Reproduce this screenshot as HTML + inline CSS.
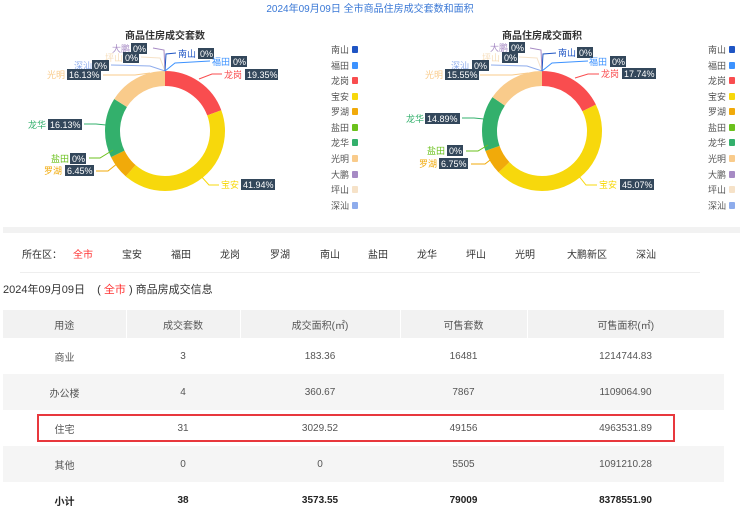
<!DOCTYPE html>
<html><head><meta charset="utf-8"><style>
*{margin:0;padding:0;box-sizing:border-box}
body{width:740px;height:524px;background:#fff;font-family:"Liberation Sans","Noto Sans CJK SC",sans-serif;overflow:hidden;position:relative;color:#333}
svg text{font-family:"Liberation Sans","Noto Sans CJK SC",sans-serif}
.band{position:absolute;left:3px;top:227px;width:737px;height:6px;background:#f2f2f2}
.filter{position:absolute;top:246px;left:22px;font-size:10px;color:#333;white-space:nowrap}
.filter span{position:absolute;top:0}
.hr{position:absolute;left:20px;top:272px;width:680px;height:1px;background:#eee}
.ttl{position:absolute;left:3px;top:281px;font-size:11px;color:#333;white-space:nowrap}
table{position:absolute;left:3px;top:310px;width:721px;border-collapse:collapse;font-size:10px;color:#555}
td{text-align:center;padding:0}
tr.h td{background:#f2f2f2;height:28px;border-left:1px solid #fff}
tr.g td{background:#f5f5f5}
tr.r td{height:36px}
tr.b td{font-weight:bold;color:#222}
.box{position:absolute;left:37px;top:414px;width:638px;height:28px;border:2px solid #e8383d}
</style></head><body>
<svg width="740" height="226" style="position:absolute;left:0;top:0">
<text x="370" y="12" text-anchor="middle" font-size="10" fill="#3a78d6">2024年09月09日 全市商品住房成交套数和面积</text>
<text x="165" y="39" text-anchor="middle" font-size="10" fill="#333" font-weight="bold">商品住房成交套数</text>
<text x="542" y="39" text-anchor="middle" font-size="10" fill="#333" font-weight="bold">商品住房成交面积</text>
<!-- donut 1 -->
<g transform="rotate(-90 165 131)" fill="none" stroke-width="15">
<circle cx="165" cy="131" r="52.5" stroke="#f94d4f" stroke-dasharray="63.83 400" stroke-dashoffset="0"/>
<circle cx="165" cy="131" r="52.5" stroke="#f7d80c" stroke-dasharray="138.35 400" stroke-dashoffset="-63.83"/>
<circle cx="165" cy="131" r="52.5" stroke="#f1aa0a" stroke-dasharray="21.28 400" stroke-dashoffset="-202.18"/>
<circle cx="165" cy="131" r="52.5" stroke="#33b06c" stroke-dasharray="53.21 400" stroke-dashoffset="-223.46"/>
<circle cx="165" cy="131" r="52.5" stroke="#f9cb8b" stroke-dasharray="53.21 400" stroke-dashoffset="-276.67"/>
</g>
<g transform="rotate(-90 542 131)" fill="none" stroke-width="15">
<circle cx="542" cy="131" r="52.5" stroke="#f94d4f" stroke-dasharray="58.52 400" stroke-dashoffset="0"/>
<circle cx="542" cy="131" r="52.5" stroke="#f7d80c" stroke-dasharray="148.67 400" stroke-dashoffset="-58.52"/>
<circle cx="542" cy="131" r="52.5" stroke="#f1aa0a" stroke-dasharray="22.27 400" stroke-dashoffset="-207.19"/>
<circle cx="542" cy="131" r="52.5" stroke="#33b06c" stroke-dasharray="49.12 400" stroke-dashoffset="-229.46"/>
<circle cx="542" cy="131" r="52.5" stroke="#f9cb8b" stroke-dasharray="51.29 400" stroke-dashoffset="-278.58"/>
</g>
<!-- leader lines chart1 -->
<g fill="none" stroke-width="1">
<polyline points="165,71 164,50 153,48" stroke="#a68ac4"/>
<polyline points="165,71 160,58 141,57" stroke="#f6e2c8"/>
<polyline points="165,71 150,66 111,65" stroke="#8eacec"/>
<polyline points="150,73 135,75 103,75" stroke="#f9cb8b"/>
<polyline points="165,71 166,54 176,53" stroke="#1f55c4"/>
<polyline points="165,71 175,63 210,61" stroke="#3c92ff"/>
<polyline points="199,79 212,74 222,74" stroke="#f94d4f"/>
<polyline points="106,125 96,124 84,124" stroke="#33b06c"/>
<polyline points="113,150 100,158 89,158" stroke="#6bc11c"/>
<polyline points="118,163 108,171 96,171" stroke="#f1aa0a"/>
<polyline points="200,175 209,185 219,185" stroke="#f7d80c"/>
<polyline points="542,71 541,50 530,48" stroke="#a68ac4"/>
<polyline points="542,71 537,58 519,57" stroke="#f6e2c8"/>
<polyline points="542,71 527,66 491,65" stroke="#8eacec"/>
<polyline points="528,73 512,75 480,75" stroke="#f9cb8b"/>
<polyline points="542,71 543,54 556,53" stroke="#1f55c4"/>
<polyline points="542,71 552,63 588,61" stroke="#3c92ff"/>
<polyline points="575,78 588,74 599,74" stroke="#f94d4f"/>
<polyline points="484,119 474,118 462,118" stroke="#33b06c"/>
<polyline points="488,145 478,151 466,151" stroke="#6bc11c"/>
<polyline points="494,157 485,164 471,164" stroke="#f1aa0a"/>
<polyline points="578,175 586,185 597,185" stroke="#f7d80c"/>
</g>
<g font-size="9">
<!-- chart1 labels -->
<text x="112" y="52" fill="#a68ac4">大鹏</text><rect x="131" y="43" width="16" height="11" fill="#33475b"/><text x="133" y="52" fill="#fff">0%</text>
<text x="105" y="61" fill="#f6dcb8">坪山</text><rect x="123" y="52" width="16" height="11" fill="#33475b"/><text x="125" y="61" fill="#fff">0%</text>
<text x="74" y="69" fill="#8eacec">深汕</text><rect x="92" y="60" width="17" height="11" fill="#33475b"/><text x="94" y="69" fill="#fff">0%</text>
<text x="47" y="78" fill="#f9cb8b">光明</text><rect x="67" y="69" width="34" height="11" fill="#33475b"/><text x="69" y="78" fill="#fff">16.13%</text>
<text x="178" y="57" fill="#1f55c4">南山</text><rect x="198" y="48" width="16" height="11" fill="#33475b"/><text x="200" y="57" fill="#fff">0%</text>
<text x="212" y="65" fill="#3c92ff">福田</text><rect x="231" y="56" width="16" height="11" fill="#33475b"/><text x="233" y="65" fill="#fff">0%</text>
<text x="224" y="78" fill="#f94d4f">龙岗</text><rect x="245" y="69" width="33" height="11" fill="#33475b"/><text x="247" y="78" fill="#fff">19.35%</text>
<text x="28" y="128" fill="#33b06c">龙华</text><rect x="48" y="119" width="34" height="11" fill="#33475b"/><text x="50" y="128" fill="#fff">16.13%</text>
<text x="51" y="162" fill="#6bc11c">盐田</text><rect x="70" y="153" width="16" height="11" fill="#33475b"/><text x="72" y="162" fill="#fff">0%</text>
<text x="44" y="174" fill="#f1aa0a">罗湖</text><rect x="65" y="165" width="29" height="11" fill="#33475b"/><text x="67" y="174" fill="#fff">6.45%</text>
<text x="221" y="188" fill="#f7d80c">宝安</text><rect x="241" y="179" width="34" height="11" fill="#33475b"/><text x="243" y="188" fill="#fff">41.94%</text>
<!-- chart2 labels -->
<text x="490" y="51" fill="#a68ac4">大鹏</text><rect x="509" y="42" width="16" height="11" fill="#33475b"/><text x="511" y="51" fill="#fff">0%</text>
<text x="482" y="61" fill="#f6dcb8">坪山</text><rect x="502" y="52" width="16" height="11" fill="#33475b"/><text x="504" y="61" fill="#fff">0%</text>
<text x="451" y="69" fill="#8eacec">深汕</text><rect x="472" y="60" width="17" height="11" fill="#33475b"/><text x="474" y="69" fill="#fff">0%</text>
<text x="425" y="78" fill="#f9cb8b">光明</text><rect x="445" y="69" width="34" height="11" fill="#33475b"/><text x="447" y="78" fill="#fff">15.55%</text>
<text x="558" y="56" fill="#1f55c4">南山</text><rect x="577" y="47" width="16" height="11" fill="#33475b"/><text x="579" y="56" fill="#fff">0%</text>
<text x="589" y="65" fill="#3c92ff">福田</text><rect x="610" y="56" width="16" height="11" fill="#33475b"/><text x="612" y="65" fill="#fff">0%</text>
<text x="601" y="77" fill="#f94d4f">龙岗</text><rect x="622" y="68" width="34" height="11" fill="#33475b"/><text x="624" y="77" fill="#fff">17.74%</text>
<text x="406" y="122" fill="#33b06c">龙华</text><rect x="425" y="113" width="35" height="11" fill="#33475b"/><text x="427" y="122" fill="#fff">14.89%</text>
<text x="427" y="154" fill="#6bc11c">盐田</text><rect x="447" y="145" width="16" height="11" fill="#33475b"/><text x="449" y="154" fill="#fff">0%</text>
<text x="419" y="167" fill="#f1aa0a">罗湖</text><rect x="439" y="158" width="29" height="11" fill="#33475b"/><text x="441" y="167" fill="#fff">6.75%</text>
<text x="599" y="188" fill="#f7d80c">宝安</text><rect x="620" y="179" width="34" height="11" fill="#33475b"/><text x="622" y="188" fill="#fff">45.07%</text>
</g>
<!-- legends -->
<g font-size="9" fill="#555">
<text x="331" y="53">南山</text><text x="331" y="69">福田</text><text x="331" y="84">龙岗</text><text x="331" y="100">宝安</text><text x="331" y="115">罗湖</text><text x="331" y="131">盐田</text><text x="331" y="146">龙华</text><text x="331" y="162">光明</text><text x="331" y="178">大鹏</text><text x="331" y="193">坪山</text><text x="331" y="209">深汕</text>
<text x="708" y="53">南山</text><text x="708" y="69">福田</text><text x="708" y="84">龙岗</text><text x="708" y="100">宝安</text><text x="708" y="115">罗湖</text><text x="708" y="131">盐田</text><text x="708" y="146">龙华</text><text x="708" y="162">光明</text><text x="708" y="178">大鹏</text><text x="708" y="193">坪山</text><text x="708" y="209">深汕</text>
</g>
<g>
<rect x="352" y="46" width="6" height="7" rx="1" fill="#1f55c4"/><rect x="352" y="62" width="6" height="7" rx="1" fill="#3c92ff"/><rect x="352" y="77" width="6" height="7" rx="1" fill="#f94d4f"/><rect x="352" y="93" width="6" height="7" rx="1" fill="#f7d80c"/><rect x="352" y="108" width="6" height="7" rx="1" fill="#f1aa0a"/><rect x="352" y="124" width="6" height="7" rx="1" fill="#6bc11c"/><rect x="352" y="139" width="6" height="7" rx="1" fill="#33b06c"/><rect x="352" y="155" width="6" height="7" rx="1" fill="#f9cb8b"/><rect x="352" y="171" width="6" height="7" rx="1" fill="#a68ac4"/><rect x="352" y="186" width="6" height="7" rx="1" fill="#f6e2c8"/><rect x="352" y="202" width="6" height="7" rx="1" fill="#8eacec"/>
<rect x="729" y="46" width="6" height="7" rx="1" fill="#1f55c4"/><rect x="729" y="62" width="6" height="7" rx="1" fill="#3c92ff"/><rect x="729" y="77" width="6" height="7" rx="1" fill="#f94d4f"/><rect x="729" y="93" width="6" height="7" rx="1" fill="#f7d80c"/><rect x="729" y="108" width="6" height="7" rx="1" fill="#f1aa0a"/><rect x="729" y="124" width="6" height="7" rx="1" fill="#6bc11c"/><rect x="729" y="139" width="6" height="7" rx="1" fill="#33b06c"/><rect x="729" y="155" width="6" height="7" rx="1" fill="#f9cb8b"/><rect x="729" y="171" width="6" height="7" rx="1" fill="#a68ac4"/><rect x="729" y="186" width="6" height="7" rx="1" fill="#f6e2c8"/><rect x="729" y="202" width="6" height="7" rx="1" fill="#8eacec"/>
</g>
</svg>
<div class="band"></div>
<div class="filter">
<span style="left:0">所在区：</span><span style="left:51px;color:#f33">全市</span><span style="left:100px">宝安</span><span style="left:149px">福田</span><span style="left:198px">龙岗</span><span style="left:248px">罗湖</span><span style="left:298px">南山</span><span style="left:346px">盐田</span><span style="left:395px">龙华</span><span style="left:444px">坪山</span><span style="left:493px">光明</span><span style="left:545px">大鹏新区</span><span style="left:614px">深汕</span>
</div>
<div class="hr"></div>
<div class="ttl">2024年09月09日 &nbsp;&nbsp; ( <span style="color:#f33">全市</span> ) 商品房成交信息</div>
<table>
<colgroup><col style="width:123px"><col style="width:114px"><col style="width:160px"><col style="width:127px"><col style="width:197px"></colgroup>
<tr class="h"><td style="border-left:0">用途</td><td>成交套数</td><td>成交面积(㎡)</td><td>可售套数</td><td>可售面积(㎡)</td></tr>
<tr class="r"><td>商业</td><td>3</td><td>183.36</td><td>16481</td><td>1214744.83</td></tr>
<tr class="r g"><td>办公楼</td><td>4</td><td>360.67</td><td>7867</td><td>1109064.90</td></tr>
<tr class="r"><td>住宅</td><td>31</td><td>3029.52</td><td>49156</td><td>4963531.89</td></tr>
<tr class="r g"><td>其他</td><td>0</td><td>0</td><td>5505</td><td>1091210.28</td></tr>
<tr class="r b"><td>小计</td><td>38</td><td>3573.55</td><td>79009</td><td>8378551.90</td></tr>
</table>
<div class="box"></div>
</body></html>
